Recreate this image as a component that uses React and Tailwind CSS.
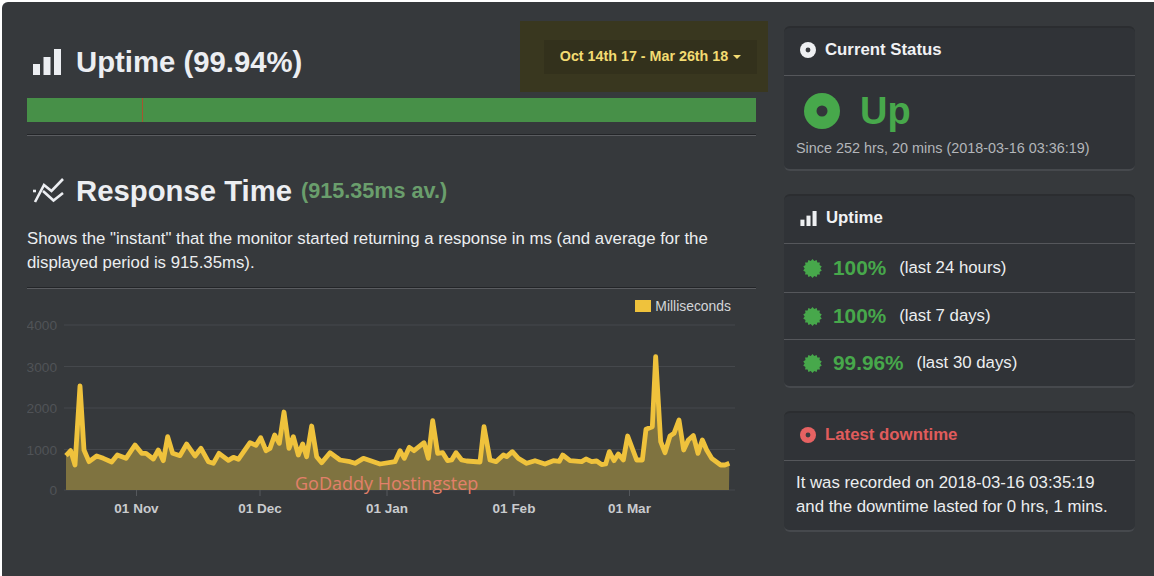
const toPoints = (pts, ox) => pts.map(([x, y]) => [ox + x / 3, 290 + y / 3]);

const linePoints = [
  ...toPoints([[138,497],[152,482],[165,525],[180,288],[192,480],[207,515],[230,498],[250,505],[275,516],[292,495],[318,505],[345,465],[365,490],[378,490],[400,507],[415,480],[430,512],[443,440],[458,490],[480,497],[500,462],[525,498],[543,475],[565,515],[580,520],[597,490],[625,511],[640,502],[655,508],[690,458],[708,466],[722,443],[738,482]], 20),
  ...toPoints([[0,475],[14,435],[28,460],[42,366],[57,475],[70,440],[85,495],[98,462],[110,500],[125,408],[140,500],[155,518],[180,488],[210,510],[240,515],[255,520],[280,505],[330,522],[375,515],[390,482],[403,505],[418,472],[432,482],[462,458],[475,505],[488,392],[503,490],[518,488],[533,512],[545,510],[558,488],[575,510],[590,513],[630,516],[642,410],[660,510],[678,515],[700,495],[710,500],[727,485]], 270),
  ...toPoints([[25,505],[50,520],[75,512],[105,522],[130,512],[148,514],[158,495],[180,512],[215,515],[228,507],[245,515],[260,513],[275,524],[287,522],[298,485],[312,512],[325,492],[340,510],[353,438],[380,510],[397,510],[408,418],[427,410],[437,200],[452,455],[465,488],[480,438],[492,430],[507,390],[521,480],[535,450],[550,437],[564,490],[577,450],[590,480],[605,505],[632,525],[645,525],[658,520]], 510),
];

function BarsIcon({ className }) {
  return (
    <svg viewBox="0 0 28 26" className={className} fill="currentColor">
      <rect x="0" y="15" width="7" height="11" />
      <rect x="10.5" y="8" width="7" height="18" />
      <rect x="21" y="0" width="7" height="26" />
    </svg>
  );
}

function TrendIcon({ className }) {
  return (
    <svg viewBox="0 0 32 26" className={className} fill="none" stroke="currentColor" strokeWidth="2.6">
      <path d="M3 24 L12 7 L19.5 13 L31 1" />
      <path d="M1 13 L4 13" />
      <path d="M11 13 L21.5 22.5 L31 15" />
    </svg>
  );
}

function DotIcon({ className, hole }) {
  return (
    <svg viewBox="0 0 36 36" className={className}>
      <circle cx="18" cy="18" r="18" fill="currentColor" />
      <circle cx="18" cy="18" r="5.5" fill={hole} />
    </svg>
  );
}

function BurstIcon() {
  const spikes = 14;
  const pts = [];
  for (let i = 0; i < spikes * 2; i++) {
    const r = i % 2 === 0 ? 10 : 8.2;
    const a = (Math.PI * i) / spikes;
    pts.push(`${10 + r * Math.sin(a)},${10 - r * Math.cos(a)}`);
  }
  return (
    <svg viewBox="0 0 20 20" className="w-[19px] h-[19px] text-[#47a84b]" fill="currentColor">
      <polygon points={pts.join(" ")} />
    </svg>
  );
}

function Card({ icon, title, titleClass, children }) {
  return (
    <section className="rounded-md bg-[#303337] border-t-2 border-t-[#2b2d30] border-b-2 border-b-[#46494d]">
      <header className="h-[48px] flex items-center gap-[9px] pl-[16px] pb-[3px] border-b border-b-[#55575b]">
        {icon}
        <h3 className={`text-[16.8px] font-bold ${titleClass}`}>{title}</h3>
      </header>
      {children}
    </section>
  );
}

function UptimeRow({ pct, label, className }) {
  return (
    <div className={`flex items-center pl-[19px] ${className}`}>
      <BurstIcon />
      <span className="ml-[11px] text-[20.8px] font-bold text-[#47a84b]">{pct}</span>
      <span className="ml-[13px] text-[16.8px] text-[#eceef0]">{label}</span>
    </div>
  );
}

function Chart() {
  const grid = [
    [325, "4000"],
    [366.5, "3000"],
    [408, "2000"],
    [449.5, "1000"],
    [490, "0"],
  ];
  const ticks = [
    [136.5, "01 Nov"],
    [260, "01 Dec"],
    [387, "01 Jan"],
    [514, "01 Feb"],
    [629.5, "01 Mar"],
  ];
  const line = linePoints.map((p) => p.join(",")).join(" ");
  const area = `66,490 ${line} 729,490`;

  return (
    <div className="relative h-[225px]">
      <svg viewBox="27 295 740 225" className="w-[740px] h-[225px] block">
        {grid.map(([y, label]) => (
          <g key={label}>
            <line x1="64" x2="735" y1={y} y2={y} stroke="#45484c" strokeWidth="1" />
            <text x="57" y={y + 5} textAnchor="end" fontSize="13.7" fill="#505357">{label}</text>
          </g>
        ))}
        {ticks.map(([x, label]) => (
          <g key={label}>
            <line x1={x} x2={x} y1="490" y2="496" stroke="#55585c" />
            <text x={x} y="513" textAnchor="middle" fontSize="13.5" fontWeight="700" fill="#c9cbce">{label}</text>
          </g>
        ))}
        <polygon points={area} fill="#7f7340" />
        <polyline points={line} fill="none" stroke="#efc23c" strokeWidth="4.8" strokeLinejoin="round" />
      </svg>
      <div className="absolute top-[1px] right-[36px] flex items-center gap-[4px] text-[13.9px] text-[#d3d5d8]">
        <span className="w-[16px] h-[12px] bg-[#efc23c]" />
        Milliseconds
      </div>
      <span className="absolute left-[268px] top-[175px] text-[18px] text-[#e2806a] [font-family:'Open_Sans',sans-serif]">
        GoDaddy Hostingstep
      </span>
    </div>
  );
}

export default function App() {
  return (
    <div className="w-[1154px] h-[576px] bg-white pl-[2px] pt-[2px] overflow-hidden [font-family:'Liberation_Sans',Arial,sans-serif]">
      <div className="h-full flex rounded-tl-md bg-[#36393c]">
        {/* Left column */}
        <main className="w-[729px] ml-[25px] shrink-0">
          <div className="flex items-start justify-between pt-[19px] h-[96px] -mr-[12px]">
            <h1 className="flex items-center gap-[15px] h-[81px] text-[29.3px] font-bold text-[#eceef2]">
              <BarsIcon className="w-[28px] h-[26px] ml-[6px]" />
              Uptime (99.94%)
            </h1>
            <div className="w-[248px] h-[71px] bg-[#39371f] flex items-center justify-end pr-[11px]">
              <button className="w-[213px] h-[34px] bg-[#33311c] flex items-center justify-center gap-[5px] text-[14.3px] font-bold text-[#f3dc72]">
                Oct 14th 17 - Mar 26th 18
                <span className="border-x-[4px] border-x-transparent border-t-[4px] border-t-[#f3dc72]" />
              </button>
            </div>
          </div>

          <div className="h-[24px] flex">
            <div className="w-[115px] bg-[#479048]" />
            <div className="w-px bg-[#a5552f]" />
            <div className="flex-1 bg-[#479048]" />
          </div>
          <hr className="mt-[12px] border-t border-[#232528] border-b-[#5a5c60] border-b" />

          <h2 className="mt-[35px] flex items-center text-[29.3px] font-bold text-[#eceef2] h-[40px]">
            <TrendIcon className="w-[32px] h-[26px] ml-[5px] mr-[12px]" />
            Response Time
            <span className="ml-[9px] text-[21.6px] text-[#6a9e6c]">(915.35ms av.)</span>
          </h2>
          <p className="mt-[16px] text-[16.8px] leading-[24px] text-[#eceef0]">
            Shows the "instant" that the monitor started returning a response in ms (and average for the displayed period is 915.35ms).
          </p>
          <hr className="mt-[12px] border-t border-[#232528] border-b-[#5a5c60] border-b" />
          <div className="mt-[6px] w-[740px]">
            <Chart />
          </div>
        </main>

        {/* Right column */}
        <aside className="w-[351px] ml-[28px] pt-[24px] flex flex-col gap-[23px]">
          <Card
            title="Current Status"
            titleClass="text-[#f1f2f4]"
            icon={<DotIcon className="w-[16px] h-[16px] text-[#eef0f2]" hole="#3a3c40" />}
          >
            <div className="h-[93px] pl-[12px]">
              <div className="flex items-center h-[62px] pt-[8px] pl-[8px] gap-[20px]">
                <DotIcon className="w-[36px] h-[36px] text-[#47a84b]" hole="#33353a" />
                <span className="text-[38px] font-bold text-[#47a84b]">Up</span>
              </div>
              <p className="text-[14.4px] text-[#b3b6ba]">Since 252 hrs, 20 mins (2018-03-16 03:36:19)</p>
            </div>
          </Card>

          <Card
            title="Uptime"
            titleClass="text-[#f1f2f4]"
            icon={<BarsIcon className="w-[17px] h-[15px] text-[#eef0f2]" />}
          >
            <UptimeRow pct="100%" label="(last 24 hours)" className="h-[49px] border-b border-b-[#55575b]" />
            <UptimeRow pct="100%" label="(last 7 days)" className="h-[47px] border-b border-b-[#55575b]" />
            <UptimeRow pct="99.96%" label="(last 30 days)" className="h-[46px]" />
          </Card>

          <Card
            title="Latest downtime"
            titleClass="text-[#e05c5c]"
            icon={<DotIcon className="w-[16px] h-[16px] text-[#e66262]" hole="#3a3c40" />}
          >
            <p className="h-[69px] pl-[12px] pt-[10px] text-[16.8px] leading-[24px] text-[#eceef0]">
              It was recorded on 2018-03-16 03:35:19
              <br />
              and the downtime lasted for 0 hrs, 1 mins.
            </p>
          </Card>
        </aside>
      </div>
    </div>
  );
}
